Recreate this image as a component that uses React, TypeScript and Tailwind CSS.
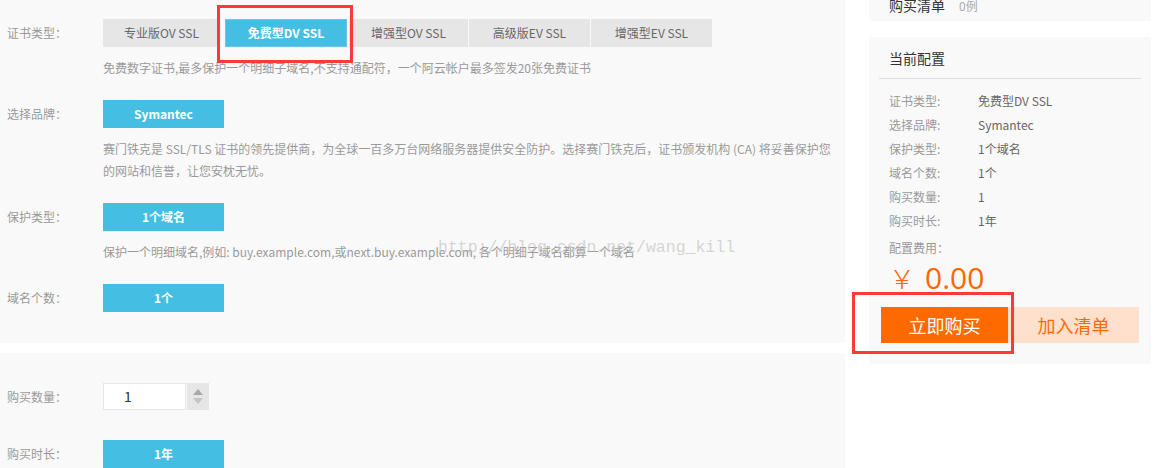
import React from 'react';

const font = { fontFamily: '"Noto Sans CJK SC", "Noto Sans", sans-serif' };

const tabs = [
  { t: '专业版OV SSL', cls: 'w-[117px]' },
  { t: '免费型DV SSL', cls: 'w-[122px] ml-[5px]', on: true },
  { t: '增强型OV SSL', cls: 'w-[119px] ml-[2px]' },
  { t: '高级版EV SSL', cls: 'w-[121px] ml-[1px]' },
  { t: '增强型EV SSL', cls: 'w-[121px] ml-[1px]' },
];

const summary: [string, string][] = [
  ['证书类型:', '免费型DV SSL'],
  ['选择品牌:', 'Symantec'],
  ['保护类型:', '1个域名'],
  ['域名个数:', '1个'],
  ['购买数量:', '1'],
  ['购买时长:', '1年'],
];

function Row({ label, children }: { label: string; children: React.ReactNode }) {
  return (
    <div className="flex">
      <div className="w-[103px] pl-[7px] h-[28px] flex items-center text-[12px] text-[#999]">{label}</div>
      <div className="flex-1">{children}</div>
    </div>
  );
}

function BlueBtn({ text }: { text: string }) {
  return (
    <div className="w-[121px] h-[28px] bg-[#44bfe3] text-white text-[12px] font-bold flex items-center justify-center">
      {text}
    </div>
  );
}

function Desc({ children }: { children: React.ReactNode }) {
  return <p className="mt-[10px] text-[12px] leading-[22px] text-[#999] pr-[8px]">{children}</p>;
}

export default function App() {
  return (
    <div className="relative w-[1158px] h-[468px] overflow-hidden bg-white flex" style={font}>
      {/* left form */}
      <div className="w-[845px] flex flex-col">
        <div className="h-[343px] bg-[#f9f9f9] pt-[19px]">
          <Row label="证书类型：">
            <div className="flex">
              {tabs.map(({ t, cls, on }) =>
                on ? (
                  <div
                    key={t}
                    className={`${cls} h-[28px] bg-[#44bfe3] border border-[#6cc4ee] text-white font-bold text-[12px] flex items-center justify-center`}
                  >
                    {t}
                  </div>
                ) : (
                  <div
                    key={t}
                    className={`${cls} h-[28px] bg-[#e6e6e6] text-[#666] text-[12px] flex items-center justify-center`}
                  >
                    {t}
                  </div>
                )
              )}
            </div>
            <Desc>免费数字证书,最多保护一个明细子域名,不支持通配符，一个阿云帐户最多签发20张免费证书</Desc>
          </Row>
          <div className="mt-[21px]">
            <Row label="选择品牌：">
              <BlueBtn text="Symantec" />
              <Desc>
                赛门铁克是 SSL/TLS 证书的领先提供商，为全球一百多万台网络服务器提供安全防护。选择赛门铁克后，证书颁发机构 (CA) 将妥善保护您的网站和信誉，让您安枕无忧。
              </Desc>
            </Row>
          </div>
          <div className="mt-[21px]">
            <Row label="保护类型：">
              <BlueBtn text="1个域名" />
              <Desc>保护一个明细域名,例如: buy.example.com,或next.buy.example.com, 各个明细子域名都算一个域名</Desc>
            </Row>
          </div>
          <div className="mt-[21px]">
            <Row label="域名个数：">
              <BlueBtn text="1个" />
            </Row>
          </div>
        </div>
        <div className="h-[10px] bg-white" />
        <div className="flex-1 bg-[#f9f9f9] pt-[30px]">
          <div className="flex">
            <div className="w-[103px] pl-[7px] h-[27px] flex items-center text-[12px] text-[#999]">购买数量：</div>
            <div className="w-[83px] h-[27px] bg-white border border-[#e6e6e6] flex items-center pl-[20px] text-[14px] text-[#333]">
              1
            </div>
            <div className="ml-[1px] w-[22px] h-[27px] bg-[#e6e6e6] flex flex-col items-center justify-center gap-[3px]">
              <svg width="10" height="6" viewBox="0 0 10 6">
                <path d="M5 0L10 6H0Z" fill="#a8a8a8" />
              </svg>
              <svg width="10" height="6" viewBox="0 0 10 6">
                <path d="M0 0H10L5 6Z" fill="#c4c4c4" />
              </svg>
            </div>
          </div>
          <div className="mt-[30px]">
            <Row label="购买时长：">
              <BlueBtn text="1年" />
            </Row>
          </div>
        </div>
      </div>

      {/* right summary */}
      <div className="flex-1 bg-white pl-[24px]">
        <div className="w-[282px] h-[21px] bg-[#f9f9f9] overflow-hidden">
          <div className="flex items-baseline pl-[20px] -mt-[6px] leading-[22px]">
            <span className="text-[14px] text-[#333]">购买清单</span>
            <span className="ml-[14px] text-[12px] text-[#aaa]">0例</span>
          </div>
        </div>
        <div className="mt-[16px] w-[282px] h-[327px] bg-[#f9f9f9]">
          <div className="pl-[20px] pt-[10px] h-[41px] text-[14px] leading-[22px] text-[#333]">当前配置</div>
          <div className="mx-[10px] h-px bg-[#dddddd]" />
          <div className="pl-[20px] pt-[10px]">
            {summary.map(([k, v]) => (
              <div key={k} className="flex h-[24px] items-center text-[12px]">
                <span className="w-[89px] text-[#999]">{k}</span>
                <span className="text-[#666]">{v}</span>
              </div>
            ))}
            <div className="h-[30px] flex items-center text-[12px] text-[#999]">配置费用：</div>
            <div className="flex items-center h-[30px] text-[#ff6600]">
              <span className="text-[26px] leading-none font-light">￥</span>
              <span className="ml-[10px] text-[30px] leading-none" style={{ fontFamily: '"Open Sans", "Noto Sans", sans-serif' }}>
                0.00
              </span>
            </div>
          </div>
          <div className="flex ml-[12px] mt-[14px]">
            <div className="w-[127px] h-[36px] bg-[#ff6a00] text-white text-[18px] flex items-center justify-center">立即购买</div>
            <div className="w-[131px] h-[36px] bg-[#ffe0cc] text-[#ff6a00] text-[18px] flex items-center justify-center">加入清单</div>
          </div>
        </div>
      </div>

      {/* watermark */}
      <div
        className="absolute left-[438px] top-[236px] text-[16.5px] text-[#c4c4c4]/70 pointer-events-none"
        style={{ fontFamily: '"Liberation Mono", monospace' }}
      >
        http://blog.csdn.net/wang_kill
      </div>

      {/* red annotation boxes */}
      <div className="absolute left-[217px] top-[5px] w-[136px] h-[58px] border-[3px] border-[#f83a3a] pointer-events-none" />
      <div className="absolute left-[852px] top-[292px] w-[162px] h-[62px] border-[3px] border-[#f83a3a] pointer-events-none" />
    </div>
  );
}
